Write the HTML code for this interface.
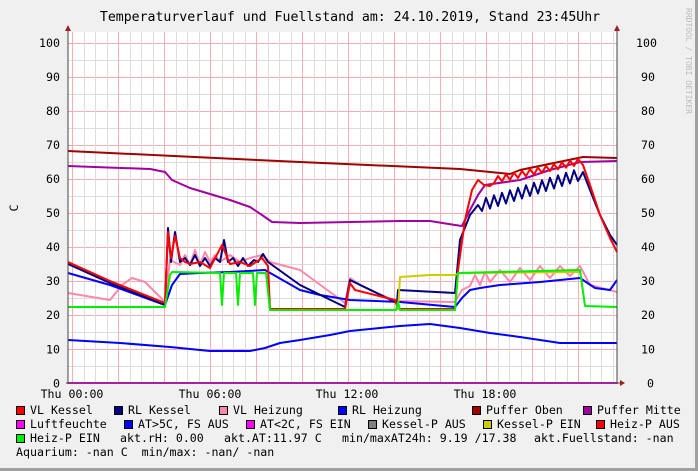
<!DOCTYPE html>
<html><head><meta charset="utf-8"><style>
html,body{margin:0;padding:0}
body{width:698px;height:471px;overflow:hidden;background:#f0f0f0;font-family:"DejaVu Sans Mono","Liberation Mono",monospace}
#f{position:absolute;left:0;top:0;width:695px;height:468px;border-right:3px solid #a0a0a0;border-bottom:3px solid #a0a0a0;box-sizing:content-box}
svg{position:absolute;left:0;top:0}
.t{position:absolute;font-size:11.6px;color:#000;white-space:pre;line-height:13px}
.s{position:absolute;width:9px;height:9px;border:1px solid #000;box-sizing:border-box}
</style></head><body><div id="f"></div>
<svg width="698" height="471" viewBox="0 0 698 471" id="g">
<rect x="68" y="32" width="549" height="352" fill="#fff"/>
<g id="grid"></g>
<g font-family="DejaVu Sans Mono, Liberation Mono, monospace" font-size="11.6" fill="#000">
<text x="350" y="21" text-anchor="middle" font-size="13.2">Temperaturverlauf und Fuellstand am: 24.10.2019, Stand 23:45Uhr</text>
<g text-anchor="end" id="yl"></g>
<g id="yr"></g>
<text x="72" y="398" text-anchor="middle">Thu 00:00</text>
<text x="210" y="398" text-anchor="middle">Thu 06:00</text>
<text x="347" y="398" text-anchor="middle">Thu 12:00</text>
<text x="485" y="398" text-anchor="middle">Thu 18:00</text>
<text x="18" y="208" transform="rotate(-90 18 208)" text-anchor="middle">C</text>
<text x="686" y="8" transform="rotate(90 686 8)" font-size="8" fill="#bbb">RRDTOOL / TOBI OETIKER</text>
</g>
<g fill="none" stroke-width="2" stroke-linejoin="round">
<polyline stroke="#a000a0" points="68,166 150,169 165,172 172,180 190,188 210,194 230,200 250,207 262,215 272,222 300,223 400,221 430,221 455,225 462,226 470,210 478,195 485,185 520,180 550,170 580,162 617,161"/>
<polyline stroke="#a00000" points="68,151 300,162 460,169 510,174 520,170 583,157 617,158"/>
<polyline stroke="#ff88aa" points="68,293 110,300 122,285 132,278 145,282 165,302 170,260 180,265 185,255 190,265 195,250 200,265 205,252 210,262 215,255 220,262 230,255 240,262 250,258 262,255 270,262 300,270 345,303 350,278 360,285 395,301 455,302 462,290 470,286 475,275 480,285 485,272 490,282 500,270 510,282 520,268 530,280 540,266 550,278 560,266 570,276 580,266 590,285 617,292"/>
<polyline stroke="#0000ff" points="68,273 110,285 165,305 172,285 180,274 200,273 230,272 265,270 300,290 320,295 350,300 400,302 455,307 462,298 470,290 480,288 500,285 540,282 580,278 595,288 610,290 617,280"/>
<polyline id="rlk" stroke="#000080" points=""/>
<polyline id="vlk" stroke="#ff0000" points=""/>
<polyline stroke="#cccc00" points="398,310 400,277 430,275 455,275 460,273 580,272"/>
<polyline stroke="#00ee00" points="68,307 165,307 170,275 172,272 220,273 222,305 224,273 236,273 238,305 240,273 253,273 255,305 257,273 266,273 270,310 396,310 398,302 400,310 455,310 458,273 580,270 585,306 617,307"/>
<polyline stroke="#0000ff" points="68,340 120,343 170,347 210,351 250,351 265,348 280,343 300,340 330,335 350,331 380,328 400,326 430,324 460,328 490,333 520,337 560,343 617,343"/>
<line x1="68" y1="383" x2="617" y2="383" stroke="#ff00ff"/>
</g>
<line x1="68" y1="28" x2="68" y2="384" stroke="#444"/>
<line x1="617" y1="28" x2="617" y2="384" stroke="#444"/>
<line x1="66" y1="383" x2="622" y2="383" stroke="#444"/>
<polygon points="65,31 71,31 68,25" fill="#a02020"/>
<polygon points="614,31 620,31 617,25" fill="#a02020"/>
<polygon points="620,380 620,386 625,383" fill="#a02020"/>
</svg>
<script>
var ns="http://www.w3.org/2000/svg",g=document.getElementById('grid');
function L(x1,y1,x2,y2,c){var l=document.createElementNS(ns,'line');l.setAttribute('x1',x1);l.setAttribute('y1',y1);l.setAttribute('x2',x2);l.setAttribute('y2',y2);l.setAttribute('stroke',c);l.setAttribute('stroke-width',1);g.appendChild(l);}
function Y(v){return 383.3-v*3.403;}
for(var v=5;v<=100;v+=5){var y=Math.round(Y(v))+.5;L(68,y,617,y,v%10?'#ddd':'#f4b0b0');}
for(var x=72-11.5;x<617;x+=11.5){var xx=Math.round(x)+.5;if(xx<69)continue;var k=Math.round((x-72)/11.5);L(xx,32,xx,383,(k%4==0)?'#f4b0b0':'#ddd');}
var yl=document.getElementById('yl'),yr=document.getElementById('yr');
for(var v=0;v<=100;v+=10){var t=document.createElementNS(ns,'text');t.setAttribute('x',60);t.setAttribute('y',Y(v)+4);t.textContent=v;yl.appendChild(t);
var t2=document.createElementNS(ns,'text');t2.setAttribute('x',v==100?636:(v==0?647:641));t2.setAttribute('y',Y(v)+4);t2.textContent=v;yr.appendChild(t2);}
function zig(a,b,x0,x1,y0,y1,amp,step){for(var x=x0,i=0;x<=x1;x+=step,i++){var y=y0+(y1-y0)*(x-x0)/(x1-x0)+(i%2?-amp:amp);a.push(x+','+y.toFixed(1));}}
var r=["68,264","110,283","165,305","168,228","171,262","175,232","180,262","185,258","190,265","195,255","200,266","205,258","210,266","215,258","220,262","224,240","228,262","233,258","238,266","243,258","248,266","254,260","258,262","263,254","268,262","300,285","345,307","350,280","397,303","398,290","455,293","460,240","470,215","478,205"];
zig(r,0,482,578,205,175,6,4);r.push("583,172","590,190","600,215","610,235","617,245");
document.getElementById('rlk').setAttribute('points',r.join(' '));
var q=["68,262","110,281","165,303","168,232","171,258","175,236","180,258","185,262","190,264","200,262","210,268","222,245","230,264","240,262","250,266","262,258","268,266","270,309","345,309","350,283","355,290","395,300","398,309","455,309","458,270","465,220","472,190","478,180","484,185","490,186"];
zig(q,0,494,578,180,162,3,4);q.push("583,165","590,185","600,215","610,238","617,252");
document.getElementById('vlk').setAttribute('points',q.join(' '));
</script>
<div class="s" style="left:16px;top:406px;background:#ff0000"></div><div class="t" style="left:30px;top:404px">VL Kessel</div>
<div class="s" style="left:114px;top:406px;background:#000080"></div><div class="t" style="left:128px;top:404px">RL Kessel</div>
<div class="s" style="left:219px;top:406px;background:#ff88aa"></div><div class="t" style="left:233px;top:404px">VL Heizung</div>
<div class="s" style="left:338px;top:406px;background:#0000ff"></div><div class="t" style="left:352px;top:404px">RL Heizung</div>
<div class="s" style="left:472px;top:406px;background:#a00000"></div><div class="t" style="left:486px;top:404px">Puffer Oben</div>
<div class="s" style="left:583px;top:406px;background:#a000a0"></div><div class="t" style="left:597px;top:404px">Puffer Mitte</div>
<div class="s" style="left:16px;top:420px;background:#ff00ff"></div><div class="t" style="left:30px;top:418px">Luftfeuchte</div>
<div class="s" style="left:124px;top:420px;background:#0000ff"></div><div class="t" style="left:138px;top:418px">AT&gt;5C, FS AUS</div>
<div class="s" style="left:246px;top:420px;background:#ff00ff"></div><div class="t" style="left:260px;top:418px">AT&lt;2C, FS EIN</div>
<div class="s" style="left:368px;top:420px;background:#808080"></div><div class="t" style="left:382px;top:418px">Kessel-P AUS</div>
<div class="s" style="left:483px;top:420px;background:#cccc00"></div><div class="t" style="left:497px;top:418px">Kessel-P EIN</div>
<div class="s" style="left:596px;top:420px;background:#ff0000"></div><div class="t" style="left:610px;top:418px">Heiz-P AUS</div>
<div class="s" style="left:16px;top:434px;background:#00ee00"></div><div class="t" style="left:30px;top:432px">Heiz-P EIN</div>
<div class="t" style="left:120px;top:432px">akt.rH: 0.00</div>
<div class="t" style="left:224px;top:432px">akt.AT:11.97 C</div>
<div class="t" style="left:342px;top:432px">min/maxAT24h: 9.19 /17.38</div>
<div class="t" style="left:534px;top:432px">akt.Fuellstand: -nan</div>
<div class="t" style="left:16px;top:446px">Aquarium: -nan C  min/max: -nan/ -nan</div>
</body></html>
